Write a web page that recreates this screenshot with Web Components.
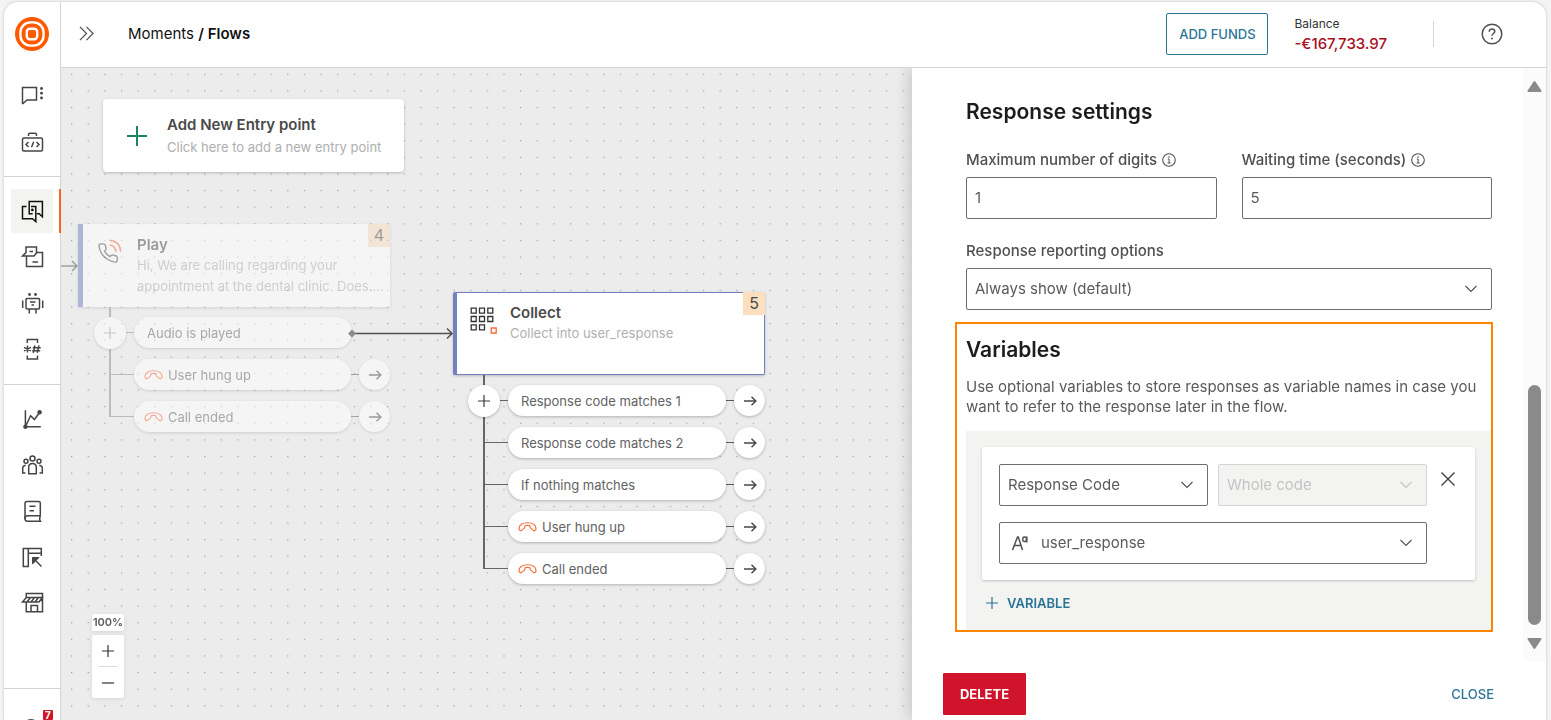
<!DOCTYPE html>
<html lang="en">
<head>
<meta charset="utf-8">
<title>Moments / Flows</title>
<style>
  html, body { margin: 0; height: 100%; }
  body { background: #f4f4f5; color: #505050; font-family: Inter, "Liberation Sans", sans-serif; font-size: 15px; overflow: hidden; }
</style>
</head>
<body>
<app-shell>
  <side-rail slot="rail">
    <rail-item slot="tools" icon="chat" label="Conversations"></rail-item>
    <rail-item slot="tools" icon="code" label="Developer tools"></rail-item>
    <rail-item slot="channels" icon="flows" label="Moments" active></rail-item>
    <rail-item slot="channels" icon="forms" label="Answers"></rail-item>
    <rail-item slot="channels" icon="robot" label="Chatbots"></rail-item>
    <rail-item slot="channels" icon="numbers" label="Numbers"></rail-item>
    <rail-item slot="data" icon="chart" label="Analyze"></rail-item>
    <rail-item slot="data" icon="people" label="People"></rail-item>
    <rail-item slot="data" icon="book" label="Catalogs"></rail-item>
    <rail-item slot="data" icon="layout" label="Content"></rail-item>
    <rail-item slot="data" icon="store" label="Exchange"></rail-item>
  </side-rail>
  <top-bar slot="header"></top-bar>
  <flow-canvas slot="main">
    <flow-step style="left:17px;top:156px" icon="call" heading="Play" number="4" faded
      text="Hi, We are calling regarding your appointment at the dental clinic. Does....">
      <flow-outcome linked>Audio is played</flow-outcome>
      <flow-outcome call>User hung up</flow-outcome>
      <flow-outcome call>Call ended</flow-outcome>
    </flow-step>
    <flow-step style="left:392px;top:224px" icon="keypad" heading="Collect" number="5" selected
      text="Collect into user_response">
      <flow-outcome>Response code matches 1</flow-outcome>
      <flow-outcome>Response code matches 2</flow-outcome>
      <flow-outcome>If nothing matches</flow-outcome>
      <flow-outcome call>User hung up</flow-outcome>
      <flow-outcome call>Call ended</flow-outcome>
    </flow-step>
  </flow-canvas>
  <settings-panel slot="main"></settings-panel>
</app-shell>

<script>
const ICONS = {
  chat: [24, '<path d="M2.500 4.500h14v12.500h-9.500l-4 3.500h-.5z"/><g fill="currentColor" stroke="none"><circle cx="21.500" cy="5.500" r="1.400"/><circle cx="21.500" cy="10.200" r="1.400"/><circle cx="21.500" cy="15" r="1.400"/></g>'],
  code: [24, '<rect x="2.500" y="9" width="20" height="13" rx="1.500"/><path d="M8.500 7V5.500Q8.500 4.200 10 4.200h5q1.500 0 1.500 1.300V7"/><path d="M8.500 13L6 15.500 8.500 18M16.500 13l2.500 2.500-2.500 2.500M13.700 12.700l-2.200 5.600"/>'],
  flows: [24, '<path d="M9.200 15.500V2.600h13.200v15.200l-3.200-3h-2.400"/><path d="M6.500 7.500H2.500v12.200h10l3.300 2.900V7.500H11"/><path d="M9.200 14.700h3.500"/><circle cx="12.400" cy="10.900" r="1.400" fill="currentColor" stroke="none"/>'],
  forms: [24, '<path d="M6 2h10.500v6L14 11H2.500L6 7.600z"/><path d="M16.800 7.500h5.700v14h-16V11M9.500 6.500h3.500M12.500 17h5.500"/>'],
  robot: [24, '<rect x="6" y="7.500" width="13.500" height="10.500" rx="1"/><path d="M2.700 9.500v7.500M22.700 9.500v7.500M9.300 18v4.500M16 18v4.500M10 11h5.500M11.500 14h2.500"/><g fill="currentColor" stroke="none"><circle cx="9.500" cy="3.500" r="1.400"/><circle cx="15.500" cy="3.500" r="1.400"/></g>'],
  numbers: [24, '<path d="M7.300 6V2.500h10.200V6M7.300 18.500V22h10.200v-3.500"/><path d="M7.500 8.500v7M4 10.300l7 3.600M11 10.300l-7 3.600M14.900 8.300l-1.600 7.600M18.900 8.300l-1.600 7.600M12.700 10.700h8M12.200 13.700h8"/>'],
  chart: [24, '<path d="M5.400 3.200v16.500h15.400M5.400 19.700l5.200-10.900 3.800 3.700 5.200-7"/><g fill="currentColor" stroke="none"><circle cx="5.400" cy="19.700" r="2.200"/><circle cx="19.600" cy="5.300" r="2.200"/></g>'],
  people: [24, '<circle cx="12.500" cy="5.600" r="2.500"/><path d="M8.700 20.800v-6.600q0-3.800 3.800-3.800t3.800 3.800v6.600z"/><circle cx="6" cy="8.200" r="2"/><circle cx="19" cy="8.200" r="2"/><path d="M5.500 20H2.700v-5q0-2.400 3-2.800M19.500 20h2.800v-5q0-2.400-3-2.800"/>'],
  book: [24, '<path d="M20.300 16.700V4q0-1.500-1.500-1.500H7Q5 2.500 5 4.500V20"/><path d="M20.500 16.700H7.500Q5 16.700 5 19.500t2.500 2.800h13q-1.600-2.500 0-5.600M9.500 7.200h6M9.500 11.700h4.500"/>'],
  layout: [24, '<path d="M3.300 3.500h5v18h-5zM8.300 3.500h13v4.700h-13M21.300 8v3"/><path d="M13.500 13.500l8 8"/><path d="M12.500 12.500h6.500l-6.500 6.500z" fill="currentColor" stroke-width="1"/>'],
  store: [24, '<path d="M6.300 11v9.800h16.200V2.500H6.300v4.200"/><path d="M6.300 6.500h16L19 11H2.500zM10.500 6.500L7 11M14.500 6.500L11 11M18.500 6.500L15 11M11 20.800v-6.300h6.500v6.300M22 6.500v4"/>'],
  brand: [34, '<circle cx="17" cy="17" r="17" fill="#ff5a00" stroke="none"/><g fill="none" stroke="#fff" stroke-width="2.400"><rect x="5.400" y="5.400" width="23.200" height="23.200" rx="10"/><rect x="11.800" y="11.800" width="10.400" height="10.400" rx="3"/></g>'],
  expand: [16, '<path d="M1 1l7 7-7 7M8 1l7 7-7 7" stroke-width="1.300"/>'],
  help: [22, '<circle cx="11" cy="11" r="9.800"/><path d="M8.200 8.800c0-1.800 1.200-2.800 2.800-2.800s2.800 1 2.800 2.600c0 1.900-2.800 2-2.800 4.200"/><circle cx="11" cy="15.600" r="1" fill="currentColor" stroke="none"/>'],
  info: [14, '<circle cx="7" cy="7" r="6.300" stroke-width="1.100"/><path d="M5.800 6h1.300v4M5.600 10h3" stroke-width="1"/><circle cx="7" cy="4" r=".8" fill="currentColor" stroke="none"/>'],
  plus: [20, '<path d="M10 0v20M0 10h20" stroke-width="2"/>'],
  minus: [20, '<path d="M0 10h20" stroke-width="2"/>'],
  chevron: [14, '<path d="M1.500 4l5.500 5.500L12.500 4" stroke-width="1.100"/>'],
  close: [16, '<path d="M1.500 1.500l13 13M14.500 1.500l-13 13" stroke-width="1.400"/>'],
  arrow: [14, '<path d="M1 7h12M8.500 2.800L12.800 7l-4.300 4.200"/>'],
  hangup: [20, '<path d="M1 12.500C1 8 5 6 10 6s9 2 9 6.500c-.3 1.700-1.700 2.300-2.800 1.600l-2.900-2.400c-.7-.7-.3-1.500-.8-2.500q-2.500-.7-5 0c-.5 1-.1 1.800-.8 2.500l-2.900 2.400c-1.100.7-2.500.1-2.800-1.600z" stroke-width="1.200"/>'],
  call: [26, '<path transform="translate(0 3) scale(.92)" d="M22 16.900v3a2 2 0 0 1-2.200 2 19.800 19.800 0 0 1-8.600-3.100 19.500 19.500 0 0 1-6-6 19.800 19.800 0 0 1-3.100-8.700A2 2 0 0 1 4.100 2h3a2 2 0 0 1 2 1.700 12.800 12.800 0 0 0 .7 2.800 2 2 0 0 1-.4 2.100L8.100 9.900a16 16 0 0 0 6 6l1.300-1.300a2 2 0 0 1 2.100-.4 12.800 12.800 0 0 0 2.800.7A2 2 0 0 1 22 16.900z"/><path d="M12.500 1.200q10.500.8 11.300 11.600M12.700 6q5.500.6 6.300 6.800" stroke="#f96b38"/>'],
  keypad: [28, '<path d="M1.200 1.200h5v5h-5zM9.500 1.200h5v5h-5zM17.800 1.200h5v5h-5zM1.200 9.500h5v5h-5zM9.500 9.500h5v5h-5zM17.800 9.500h5v5h-5zM1.200 17.800h5v5h-5zM9.500 17.800h5v5h-5z" stroke="#333" stroke-width="1.300"/><path d="M21.200 21h5v5h-5z" stroke="#f96b38" stroke-width="1.300"/>'],
  letters: [18, '<path d="M1.500 16L6.500 3h.8L11.500 16M3.300 11.500h6.800"/><rect x="11.800" y="3" width="3.600" height="4.600" rx="1.600"/><path d="M15.800 2.500v6"/>'],
};

function define(name, html, setup) {
  const template = document.createElement('template');
  template.innerHTML = html;
  customElements.define(name, class extends HTMLElement {
    constructor() {
      super();
      this.attachShadow({ mode: 'open' }).append(template.content.cloneNode(true));
    }
    connectedCallback() {
      if (setup) setup(this, s => this.shadowRoot.querySelector(s));
    }
  });
}

define('ui-icon', `<style>
  :host { display: inline-flex; flex: none; }
  svg { display: block; fill: none; stroke: currentColor; stroke-width: 1.500; overflow: visible; }
</style><svg aria-hidden="true"></svg>`, (el, $) => {
  const [box, body] = ICONS[el.getAttribute('name')];
  const size = el.getAttribute('size') || box;
  const svg = $('svg');
  svg.setAttribute('viewBox', `0 0 ${box} ${box}`);
  svg.setAttribute('width', size);
  svg.setAttribute('height', size);
  svg.innerHTML = body;
});

define('app-shell', `<style>
  :host { display: flex; height: 100vh; box-sizing: border-box; padding: 2px 5px 0 4px; }
  .frame { flex: 1; min-width: 0; display: grid; grid-template-columns: auto 1fr; grid-template-rows: auto 1fr; background: #fff;
    border-radius: 14px 14px 0 0; overflow: hidden; box-shadow: 0 0 3px rgba(0,0,0,.22); }
  .rail { grid-row: 1 / 3; min-height: 0; display: flex; border-right: 1px solid #d4d4d4; }
  main { display: flex; min-width: 0; min-height: 0; overflow: hidden; }
</style>
<div class="frame"><div class="rail"><slot name="rail"></slot></div><slot name="header"></slot><main><slot name="main"></slot></main></div>`);

define('side-rail', `<style>
  :host { display: flex; flex-direction: column; width: 56px; }
  .logo { height: 70px; box-sizing: border-box; padding: 15px 0 0 11px; flex: none; }
  nav { display: block; border-bottom: 1px solid #d4d4d4; padding-bottom: 12px; flex: none; }
  nav + nav { padding-top: 11px; }
  nav:last-of-type { border: 0; }
  .account { margin-top: auto; flex: none; height: 31px; border-top: 1px solid #d4d4d4; position: relative; overflow: hidden; }
  .face { position: absolute; left: 19px; top: 30px; width: 16px; height: 16px; border: 2px solid #505050; border-radius: 50%; box-sizing: border-box; }
  .count { position: absolute; left: 39px; top: 21px; width: 10px; height: 10px; background: #d0142c; color: #fff; font-size: 10px; line-height: 10px; font-weight: 700; text-align: center; border-radius: 1px; }
</style>
<div class="logo"><ui-icon name="brand"></ui-icon></div>
<nav><slot name="tools"></slot></nav>
<nav><slot name="channels"></slot></nav>
<nav><slot name="data"></slot></nav>
<div class="account"><span class="face"></span><span class="count">7</span></div>`);

define('rail-item', `<style>
  :host { display: block; padding: 1px 7px; }
  a { position: relative; display: flex; align-items: center; justify-content: center; height: 44px; color: #454545; border-radius: 2px; }
  :host([active]) a { background: #f3f3f1; color: #111; }
  :host([active]) a::after { content: ""; position: absolute; right: -8px; top: 0; bottom: 0; width: 2px; background: #ff6320; }
</style><a href="#"></a>`, (el, $) => {
  $('a').setAttribute('aria-label', el.getAttribute('label'));
  $('a').innerHTML = `<ui-icon name="${el.getAttribute('icon')}"></ui-icon>`;
});

define('top-bar', `<style>
  :host { display: flex; align-items: center; height: 63px; padding: 0 43px 2px 18px; border-bottom: 1px solid #d4d4d4; }
  button { font: inherit; cursor: pointer; }
  .expand { border: 0; background: none; padding: 0; color: #505050; display: flex; }
  nav { margin-left: 34px; font-size: 15px; line-height: 20px; color: #111; flex: 1; }
  nav a { color: inherit; text-decoration: none; }
  nav b { font-weight: 600; }
  .funds { width: 102px; height: 42px; padding: 0; border: 1px solid #2a7595; border-radius: 2px; background: #fff; color: #2a7595; font-size: 13px; font-weight: 500; }
  .balance { margin: 0 46px 0 26px; font-size: 12px; line-height: 20px; color: #333; }
  .balance strong { display: block; font-size: 15px; line-height: 20px; font-weight: 500; color: #a8101f; }
  .rule { width: 1px; height: 26px; background: #d4d4d4; margin-right: 47px; }
</style>
<button class="expand" aria-label="Expand menu"><ui-icon name="expand" size="15"></ui-icon></button>
<nav><a href="#">Moments</a> <b>/ Flows</b></nav>
<button class="funds">ADD FUNDS</button>
<div class="balance">Balance<strong>-€167,733.97</strong></div>
<span class="rule"></span>
<button class="expand" aria-label="Help"><ui-icon name="help"></ui-icon></button>`);

define('flow-canvas', `<style>
  :host { display: block; position: relative; flex: 1; min-width: 0; background: #ececec; overflow: hidden; }
  svg { position: absolute; inset: 0; width: 100%; height: 100%; }
  .links { pointer-events: none; }
  .entry { position: absolute; left: 42px; top: 31px; }
  zoom-control { position: absolute; left: 31px; bottom: 22px; }
</style>
<svg><defs><pattern id="dots" x="10" y="5.700" width="16.630" height="16.620" patternUnits="userSpaceOnUse"><rect width="1.300" height="1.200" fill="#a2a2a2"/></pattern></defs><rect width="100%" height="100%" fill="url(#dots)"/></svg>
<entry-card class="entry"></entry-card>
<slot></slot>
<svg class="links" fill="none">
  <path d="M0 198h16M11 193l5 5-5 5" stroke="#a0a0a0" stroke-width="1.500"/>
  <path d="M292 265.500h99M386 260.500l5 5-5 5" stroke="#505050" stroke-width="1.500"/>
  <path d="M287 265.500l4-4 4 4-4 4z" fill="#8c8c8c"/>
</svg>
<zoom-control></zoom-control>`);

define('entry-card', `<style>
  :host { display: block; }
  button { display: flex; align-items: center; gap: 20px; width: 301px; height: 73px; padding: 0 24px; border: 0; border-radius: 4px; background: #fff;
    box-shadow: 0 1px 3px rgba(0,0,0,.22); font: inherit; text-align: left; white-space: nowrap; cursor: pointer; }
  ui-icon { color: #1b8560; }
  .text { display: grid; gap: 2px; }
  b { font-size: 15px; line-height: 20px; font-weight: 600; color: #4a4a4a; }
  small { font-size: 13px; line-height: 20px; color: #aeaeae; }
</style>
<button><ui-icon name="plus"></ui-icon><span class="text"><b>Add New Entry point</b><small>Click here to add a new entry point</small></span></button>`);

define('flow-step', `<style>
  :host { display: block; position: absolute; width: 312px; }
  :host([faded]) { opacity: .5; }
  article { position: relative; box-sizing: border-box; height: 83px; display: flex; gap: 12px; padding: 11px 4px 0 14px; background: #fff;
    border: 0 solid #7181c2; border-left-width: 5px; box-shadow: 0 1px 3px rgba(0,0,0,.22); }
  :host([selected]) article { border-width: 1px 1px 1px 4px; border-radius: 2px; padding: 10px 4px 0 13px; }
  .glyph { width: 28px; flex: none; padding-top: 4px; }
  h3 { margin: 0; font-size: 15px; line-height: 20px; font-weight: 600; color: #4a4a4a; }
  p { margin: 0; font-size: 13px; line-height: 21px; color: #b0b0b0; }
  .number { position: absolute; right: 0; top: 0; width: 22px; height: 23px; background: #fbdfbf; font-size: 16px; line-height: 23px; text-align: center; color: #4a4a4a; }
  :host([selected]) .number { right: -1px; top: -1px; }
  .outcomes { position: relative; margin-left: 31px; padding-top: 10px; display: flex; flex-direction: column; gap: 11px; --line: #8c8c8c; }
  :host([selected]) .outcomes { margin-left: 30px; --line: #666; }
  .outcomes::before { content: ""; position: absolute; left: 0; top: 0; bottom: 15px; width: 2px; background: var(--line); }
  .add { position: absolute; left: -15px; top: 10px; width: 32px; height: 32px; padding: 0; border: 0; border-radius: 50%; background: #fff;
    box-shadow: 0 1px 3px rgba(0,0,0,.25); display: flex; align-items: center; justify-content: center; color: #3a3a3a; }
  :host([faded]) .add { color: #a0a0a0; }
</style>
<article><span class="glyph"></span><div><h3></h3><p></p></div><span class="number"></span></article>
<div class="outcomes"><slot></slot><button class="add" aria-label="Add outcome"><ui-icon name="plus" size="12"></ui-icon></button></div>`, (el, $) => {
  $('.glyph').innerHTML = `<ui-icon name="${el.getAttribute('icon')}"></ui-icon>`;
  $('h3').textContent = el.getAttribute('heading');
  $('p').textContent = el.getAttribute('text');
  $('.number').textContent = el.getAttribute('number');
});

define('flow-outcome', `<style>
  :host { display: flex; align-items: center; }
  .tick { width: 25px; height: 1px; background: var(--line); }
  .pill { box-sizing: border-box; width: 218px; height: 31px; border-radius: 16px; padding: 0 13px; display: flex; align-items: center; background: #fff;
    box-shadow: 0 1px 3px rgba(0,0,0,.25); font-size: 13px; line-height: 20px; color: #626262; }
  .pill ui-icon { display: none; color: #f96b38; }
  :host([call]) .pill { padding-left: 10px; gap: 5px; }
  :host([call]) .pill ui-icon { display: flex; }
  .join { width: 8px; height: 1px; background: #5a5a5a; }
  button { width: 31px; height: 31px; padding: 0; border: 0; border-radius: 50%; background: #fff; box-shadow: 0 1px 3px rgba(0,0,0,.25);
    display: flex; align-items: center; justify-content: center; color: #4a4a4a; }
  :host([linked]) .join, :host([linked]) button { display: none; }
</style>
<span class="tick"></span><span class="pill"><ui-icon name="hangup" size="19"></ui-icon><span><slot></slot></span></span><span class="join"></span><button aria-label="Connect"><ui-icon name="arrow"></ui-icon></button>`);

define('zoom-control', `<style>
  :host { display: grid; gap: 4px; width: 32px; }
  output { background: #fff; border-radius: 2px; font-size: 11px; line-height: 17px; font-weight: 600; text-align: center; color: #5c5c5c; box-shadow: 0 1px 4px rgba(0,0,0,.1); }
  div { background: #fff; border-radius: 2px; box-shadow: 0 1px 4px rgba(0,0,0,.1); }
  button { display: flex; align-items: center; justify-content: center; width: 100%; height: 31px; border: 0; background: none; padding: 0; color: #333; }
  hr { margin: 0 7px; border: 0; height: 1px; background: #dcdcdc; }
</style>
<output>100%</output><div><button aria-label="Zoom in"><ui-icon name="plus" size="12"></ui-icon></button><hr><button aria-label="Zoom out"><ui-icon name="minus" size="12"></ui-icon></button></div>`);

define('form-field', `<style>
  :host { display: block; min-width: 0; }
  label { display: flex; align-items: center; gap: 5px; margin-bottom: 7px; font-size: 15px; line-height: 20px; font-weight: 500; color: #505050; }
  label[hidden] { display: none; }
  .box { position: relative; display: flex; align-items: center; }
  input, select { appearance: none; box-sizing: border-box; width: 100%; height: 42px; padding: 0 8px 2px; margin: 0; border: 1px solid #6e6e6e; border-radius: 2px;
    background: #fff; color: #5a5a5a; font: inherit; font-size: 15px; opacity: 1; }
  :host([disabled]) select { background: #f3f3f2; border-color: #d4d4d4; color: #c4c4c4; }
  .arrow { position: absolute; right: 14px; color: #505050; pointer-events: none; }
  :host([disabled]) .arrow { color: #c4c4c4; }
  .lead { position: absolute; left: 12px; pointer-events: none; }
  :host([lead]) select { padding-left: 41px; }
</style><label for="control"><span></span></label><div class="box"></div>`, (el, $) => {
  const label = el.getAttribute('label'), value = el.getAttribute('value');
  if (label) {
    $('label span').textContent = label;
    if (el.hasAttribute('info')) $('label').insertAdjacentHTML('beforeend', '<ui-icon name="info"></ui-icon>');
  } else $('label').hidden = true;
  const name = label ? '' : ` aria-label="${el.getAttribute('name')}"`;
  $('.box').innerHTML = el.hasAttribute('choice')
    ? `<select id="control"${name}${el.hasAttribute('disabled') ? ' disabled' : ''}><option>${value}</option></select><ui-icon class="arrow" name="chevron"></ui-icon>`
      + (el.hasAttribute('lead') ? '<ui-icon class="lead" name="letters"></ui-icon>' : '')
    : `<input id="control" type="text" inputmode="numeric" value="${value}">`;
});

define('panel-scrollbar', `<style>
  :host { display: flex; flex-direction: column; align-items: center; width: 23px; box-sizing: border-box; background: #fbfbfb; padding: 12px 0 11px; }
  svg { display: block; fill: #8a8a8a; stroke: #8a8a8a; stroke-width: 2; stroke-linejoin: round; }
  .track { flex: 1; display: flex; flex-direction: column; justify-content: flex-end; padding: 10px 0 12px; }
  .thumb { width: 13px; height: 46%; border-radius: 7px; background: #8a8a8a; }
</style>
<svg width="15" height="13" aria-hidden="true"><path d="M7.500 2L13.500 11h-12z"/></svg><div class="track"><div class="thumb"></div></div><svg width="15" height="13" aria-hidden="true"><path d="M1.500 2h12L7.500 11z"/></svg>`);

define('variable-editor', `<style>
  :host { display: block; background: #f3f3f1; padding: 16px 16px 0; }
  .card { display: flex; gap: 12px; align-items: flex-start; padding: 17px 18px 16px 17px; background: #fff; border-radius: 2px; box-shadow: 0 1px 3px rgba(0,0,0,.2); }
  .grid { flex: 1; min-width: 0; display: grid; grid-template-columns: 1fr 1fr; gap: 16px 10px; }
  .wide { grid-column: 1 / 3; }
  button { font: inherit; cursor: pointer; border: 0; background: none; color: #404040; }
  .remove { padding: 7px 1px; display: flex; }
  .add { display: flex; align-items: center; gap: 9px; height: 50px; padding: 0 4px 4px; color: #2a7595; font-size: 13px; font-weight: 600; }
</style>
<div class="card"><div class="grid">
  <form-field choice name="Source" value="Response Code"></form-field>
  <form-field choice disabled name="Part" value="Whole code"></form-field>
  <form-field class="wide" choice lead name="Variable" value="user_response"></form-field>
</div><button class="remove" aria-label="Remove variable"><ui-icon name="close"></ui-icon></button></div>
<button class="add"><ui-icon name="plus" size="12"></ui-icon>VARIABLE</button>`);

define('settings-panel', `<style>
  :host { position: relative; display: flex; flex-direction: column; flex: none; width: 634px; background: #fff; box-shadow: -2px 0 14px rgba(0,0,0,.18); }
  .body { flex: 1; min-height: 0; display: flex; justify-content: space-between; }
  .content { flex: 1; min-width: 0; padding: 30px 31px 0 43px; overflow: hidden; }
  h2 { margin: 0; font-size: 21px; line-height: 28px; font-weight: 600; color: #1c1c1c; }
  .fields { display: grid; grid-template-columns: 1fr 1fr; gap: 22px 25px; margin: 24px 0 12px 11px; }
  .content > h2 { margin-left: 11px; }
  .wide { grid-column: 1 / 3; }
  section { border: 2px solid #ff8400; padding: 12px 0 0 9px; margin-right: -1px; }
  p { margin: 13px 8px 14px 0; font-size: 15px; line-height: 20px; color: #5a5a5a; }
  footer { display: flex; align-items: center; justify-content: space-between; height: 59px; box-sizing: border-box; padding: 7px 52px 0 31px; }
  button { font: inherit; font-size: 13px; cursor: pointer; border: 0; }
  .delete { height: 42px; width: 83px; padding: 0; border-radius: 1px; background: #d0142c; color: #fff; font-weight: 700; }
  .close { background: none; padding: 0; color: #2a7595; font-weight: 500; }
</style>
<div class="body"><div class="content">
  <h2>Response settings</h2>
  <div class="fields">
    <form-field label="Maximum number of digits" info value="1"></form-field>
    <form-field label="Waiting time (seconds)" info value="5"></form-field>
    <form-field class="wide" choice label="Response reporting options" value="Always show (default)"></form-field>
  </div>
  <section><h2>Variables</h2>
    <p>Use optional variables to store responses as variable names in case you want to refer to the response later in the flow.</p>
    <variable-editor></variable-editor>
  </section>
</div><panel-scrollbar></panel-scrollbar></div>
<footer><button class="delete">DELETE</button><button class="close">CLOSE</button></footer>`);
</script>
</body>
</html>
